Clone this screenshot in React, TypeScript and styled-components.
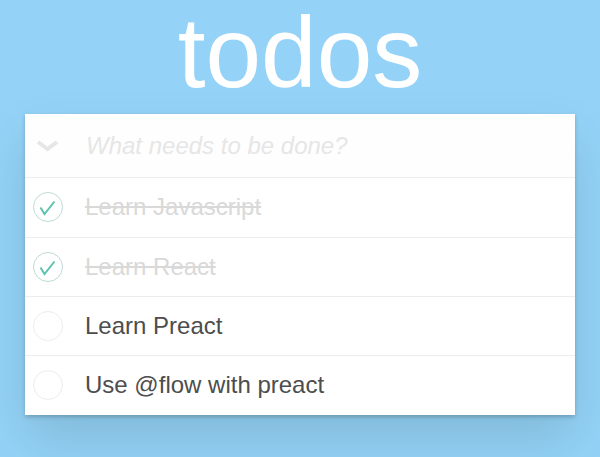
import React from "react";
import styled, { createGlobalStyle } from "styled-components";

const GlobalStyle = createGlobalStyle`
  html, body {
    margin: 0;
    padding: 0;
    background: #94d3f7;
    font-family: "Liberation Sans", Arial, sans-serif;
  }
  body {
    min-height: 100vh;
  }
`;

const Page = styled.section`
  width: 550px;
  margin: 0 auto;
  padding-bottom: 44px;
`;

const Title = styled.h1`
  margin: 2px 0 12.3px;
  height: 100px;
  font-size: 100px;
  line-height: 100px;
  font-weight: normal;
  color: #fff;
  text-align: center;
`;

const Card = styled.div`
  position: relative;
  background: #fff;
  box-shadow: 0 2px 4px rgba(0, 0, 0, 0.2), 0 25px 50px rgba(0, 0, 0, 0.12);
`;

const Header = styled.div`
  display: flex;
  align-items: center;
  height: 63px;
  border-bottom: 1px solid #ededed;
  background: rgba(0, 0, 0, 0.003);
`;

const ToggleAll = styled.span`
  display: flex;
  width: 23px;
  margin-left: 11px;
  margin-right: 27px;
`;

const NewTodo = styled.input`
  flex: 1;
  border: none;
  outline: none;
  background: transparent;
  padding: 0;
  font-family: inherit;
  font-size: 24px;
  color: #4d4d4d;
  &::placeholder {
    font-style: italic;
    color: #e6e6e6;
  }
`;

const List = styled.ul`
  list-style: none;
  margin: 0;
  padding: 0;
`;

const Row = styled.li`
  display: flex;
  align-items: center;
  height: 58.33px;
  border-bottom: 1px solid #ededed;
  &:last-child {
    border-bottom: none;
  }
`;

const Toggle = styled.span<{ $done: boolean }>`
  display: flex;
  box-sizing: border-box;
  width: 30px;
  height: 30px;
  margin-left: 8px;
  border-radius: 50%;
  border: 1px solid ${(p) => (p.$done ? "#bddad5" : "#ededed")};
`;

const Label = styled.span<{ $done: boolean }>`
  padding-left: 22px;
  font-size: 24px;
  color: ${(p) => (p.$done ? "#d9d9d9" : "#4d4d4d")};
  text-decoration: ${(p) => (p.$done ? "line-through" : "none")};
`;

const todos = [
  { text: "Learn Javascript", done: true },
  { text: "Learn React", done: true },
  { text: "Learn Preact", done: false },
  { text: "Use @flow with preact", done: false },
];

export default function App() {
  return (
    <>
      <GlobalStyle />
      <Page>
        <Title>todos</Title>
        <Card>
          <Header>
            <ToggleAll>
              <svg width="23" height="14" viewBox="0 0 23 14">
                <polyline
                  points="2,3 11.5,10 21,3"
                  fill="none"
                  stroke="#e6e6e6"
                  strokeWidth="4"
                />
              </svg>
            </ToggleAll>
            <NewTodo placeholder="What needs to be done?" />
          </Header>
          <List>
            {todos.map((t, i) => (
              <Row key={i}>
                <Toggle $done={t.done}>
                  {t.done ? (
                    <svg width="28" height="28" viewBox="0 0 28 28">
                      <polyline
                        points="6.5,14.5 10.5,21 20.5,8.5"
                        fill="none"
                        stroke="#5dc2af"
                        strokeWidth="2"
                      />
                    </svg>
                  ) : null}
                </Toggle>
                <Label $done={t.done}>{t.text}</Label>
              </Row>
            ))}
          </List>
        </Card>
      </Page>
    </>
  );
}
